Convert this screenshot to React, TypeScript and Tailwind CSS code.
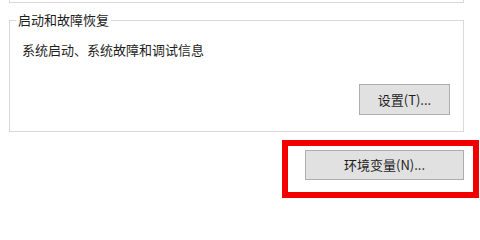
import React from "react";

const font = { fontFamily: '"Noto Sans CJK SC", "Noto Sans", sans-serif' };

export default function App() {
  return (
    <div
      className="w-[480px] h-[213px] bg-white overflow-hidden text-[13px] text-[#1e1e1e]"
      style={font}
    >
      {/* bottom of previous group box */}
      <div className="ml-[9px] w-[455px] h-[3px] border-x border-b border-[#d9d9d9]" />

      {/* group box */}
      <div className="relative ml-[9px] mt-[17px] w-[455px] h-[112px] border border-[#d9d9d9]">
        <span className="absolute left-[6px] top-[-10px] px-[2px] bg-white leading-[18px]">
          启动和故障恢复
        </span>
        <div className="pl-[12px] pt-[20px] leading-[18px]">系统启动、系统故障和调试信息</div>
        <div className="flex justify-end mr-[13px] mt-[25px]">
          <button className="w-[91px] h-[31px] bg-[#e1e1e1] border border-[#adadad] leading-[18px] text-[#1e1e1e]">
            设置(T)...
          </button>
        </div>
      </div>

      {/* highlighted button */}
      <div className="ml-[282px] mt-[8px] w-[197px] h-[58px] border-[6px] border-[#f20000] pl-[17px] pt-[4px]">
        <button className="w-[159px] h-[30px] bg-[#e1e1e1] border border-[#adadad] leading-[18px] text-[#1e1e1e]">
          环境变量(N)...
        </button>
      </div>
    </div>
  );
}
